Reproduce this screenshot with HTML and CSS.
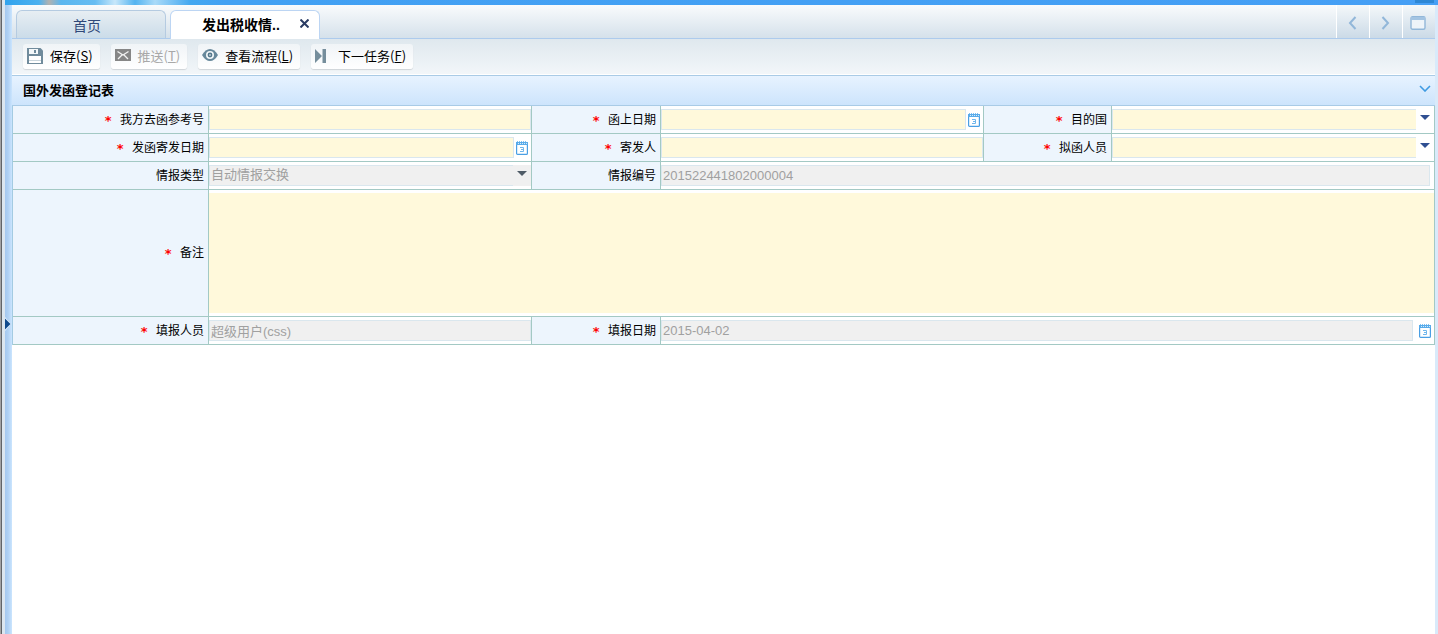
FILE: index.html
```html
<!DOCTYPE html>
<html lang="zh-CN">
<head>
<meta charset="utf-8">
<title>国外发函登记表</title>
<meta name="viewport" content="width=device-width, initial-scale=1">
<link rel="stylesheet" href="styles.css">
</head>
<body>
<svg class="defs" aria-hidden="true">
  <symbol id="calendar" viewBox="0 0 12 14">
    <rect x=".6" y="2" width="10.800" height="11.400" rx="1" fill="#fff" stroke="#4a9fe4" stroke-width="1.200"/>
    <path d="M0 1h12v3H0z" fill="#58abea"/>
    <path d="M1 .5h1M3 .5h1M5 .5h1M7 .5h1M9 .5h1" stroke="#7fc0f2"/>
    <path d="M2 2.500h1M4 2.500h1M6 2.500h1M8 2.500h1M10 2.500h1" stroke="#d4ebfb"/>
    <path d="M4 6.500h3.500v4H4M5 8.500h2" fill="none" stroke="#6fb6ec"/>
  </symbol>
  <symbol id="caret" viewBox="0 0 10 5"><path d="M0 0h10L5 5z" fill="currentColor"/></symbol>
</svg>
<div class="app">
  <aside class="rail">
    <div class="splitter">
      <button class="handle" type="button" aria-label="展开">
        <svg width="6" height="14" viewBox="0 0 6 14"><path d="M0 0l6 7-6 7z" fill="#e9f5ff"/><path d="M0 1.500l5.500 5.500-5.500 5.500z" fill="#0f4a8c"/></svg>
      </button>
    </div>
  </aside>
  <div class="main">
    <div class="banner"><span class="banner-tab"></span></div>
    <div class="body">
      <div class="content">
        <nav class="tabs">
          <button class="tab" type="button">首页</button>
          <div class="tab active">
            <a href="#form">发出税收情..</a>
            <button class="close" type="button" aria-label="关闭">
              <svg width="9" height="9" viewBox="0 0 9 9"><path d="M.5 .5l8 8M8.500 .5l-8 8" stroke="#2b3c63" stroke-width="2"/></svg>
            </button>
          </div>
          <div class="pager">
            <button type="button" aria-label="上一个"><svg width="9" height="14" viewBox="0 0 9 14"><path d="M7.5 1L2 7l5.500 6" fill="none" stroke="#92b7d9" stroke-width="2"/></svg></button>
            <button type="button" aria-label="下一个"><svg width="9" height="14" viewBox="0 0 9 14"><path d="M1.500 1L7 7l-5.500 6" fill="none" stroke="#92b7d9" stroke-width="2"/></svg></button>
            <button type="button" aria-label="窗口"><svg width="16" height="14" viewBox="0 0 16 14"><rect x="1" y=".7" width="14" height="12.600" rx="1.500" fill="#eef4f9" stroke="#92b7d9" stroke-width="1.400"/><path d="M1 1h14v3H1z" fill="#a3c4e2"/></svg></button>
          </div>
        </nav>
        <div class="toolbar">
          <button class="tool" type="button">
            <svg width="16" height="16" viewBox="0 0 16 16"><path d="M0 0h13.500L16 2.500V16H0z" fill="#708b9c"/><path d="M2 1h9v5H2z" fill="#f4f8fa"/><path d="M7 2h2v3H7z" fill="#708b9c"/><path d="M2 8h12v7H2z" fill="#fff"/><path d="M2 12h12v1H2z" fill="#c9d5dc"/></svg>
            <span>保存(<u>S</u>)</span>
          </button>
          <button class="tool raised" type="button" disabled>
            <svg width="16" height="12" viewBox="0 0 16 12"><path d="M0 0h16v12H0z" fill="#868686"/><path d="M2.500 2.500L8 6l5.500-3.500M3 10l4-4M13 10L9 6" fill="none" stroke="#f2f2f2" stroke-width="1.300"/></svg>
            <span>推送(<u>T</u>)</span>
          </button>
          <button class="tool raised" type="button">
            <svg width="16" height="12" viewBox="0 0 16 12"><path d="M0 6Q3.500 0 8 0t8 6q-3.500 6-8 6T0 6z" fill="#67889b"/><circle cx="8" cy="6" r="4" fill="#f1f6f8"/><circle cx="8" cy="6" r="2.400" fill="#54788c"/><circle cx="8" cy="6" r=".8" fill="#fff"/></svg>
            <span>查看流程(<u>L</u>)</span>
          </button>
          <button class="tool next" type="button">
            <svg width="11" height="14" viewBox="0 0 11 14"><path d="M0 0l7 7-7 7zM7.500 0H11v14H7.500z" fill="#768e9c"/></svg>
            <span>下一任务(<u>F</u>)</span>
          </button>
        </div>
        <header class="section">
          <h1>国外发函登记表</h1>
          <button type="button" aria-label="收起"><svg width="12" height="7" viewBox="0 0 12 7"><path d="M1 1l5 5 5-5" fill="none" stroke="#3f9be2" stroke-width="1.600"/></svg></button>
        </header>
        <form class="form" id="form">
          <label class="label required" for="ref">我方去函参考号</label>
          <div class="field"><input id="ref" type="text"></div>
          <label class="label required" for="letter-date">函上日期</label>
          <div class="field"><input id="letter-date" type="text"><button class="pick" type="button" aria-label="选择日期"><svg width="12" height="14"><use href="#calendar"/></svg></button></div>
          <label class="label required" for="country">目的国</label>
          <div class="field"><select id="country"><option></option></select><svg class="caret" width="10" height="5"><use href="#caret"/></svg></div>

          <label class="label required" for="send-date">发函寄发日期</label>
          <div class="field"><input id="send-date" type="text"><button class="pick" type="button" aria-label="选择日期"><svg width="12" height="14"><use href="#calendar"/></svg></button></div>
          <label class="label required" for="sender">寄发人</label>
          <div class="field"><input id="sender" type="text"></div>
          <label class="label required" for="drafter">拟函人员</label>
          <div class="field"><select id="drafter"><option></option></select><svg class="caret" width="10" height="5"><use href="#caret"/></svg></div>

          <label class="label" for="kind">情报类型</label>
          <div class="field off"><select id="kind" disabled><option>自动情报交换</option></select><svg class="caret" width="10" height="5"><use href="#caret"/></svg></div>
          <label class="label" for="number">情报编号</label>
          <div class="field wide inset"><input id="number" type="text" value="201522441802000004" disabled></div>

          <label class="label required" for="remark">备注</label>
          <div class="field full"><textarea id="remark"></textarea></div>

          <label class="label required" for="reporter">填报人员</label>
          <div class="field"><input id="reporter" type="text" value="超级用户(css)" disabled></div>
          <label class="label required" for="report-date">填报日期</label>
          <div class="field wide"><input id="report-date" type="text" value="2015-04-02" disabled><button class="pick spaced" type="button" aria-label="选择日期"><svg width="12" height="14"><use href="#calendar"/></svg></button></div>
        </form>
      </div>
    </div>
  </div>
</div>
</body>
</html>
```
FILE: styles.css
```css
* { box-sizing: border-box; }
body {
  margin: 0;
  font: 12px/16px "Liberation Sans", "Noto Sans CJK SC", sans-serif;
  color: #000;
  background: #fff;
}
button, input, select, textarea { font: inherit; color: inherit; margin: 0; }
button { padding: 0; border: 0; background: none; }
svg { display: block; flex: none; }
.defs { position: absolute; width: 0; height: 0; }

.app { display: flex; min-height: 100vh; }
.rail {
  position: relative;
  display: flex;
  flex: none;
  width: 12px;
  padding: 5px 0 0 5px;
  background: linear-gradient(90deg, #a3a3a3 1px, #606468 1px 2px, #dbe6ef 2px);
}
.splitter { flex: 1; background: linear-gradient(90deg, #a5c8ee, #aed0f3 3px, #cbe5fe); }
.handle { position: absolute; left: 5px; top: 50%; }

.main { display: flex; flex: 1; flex-direction: column; min-width: 0; }
.banner {
  display: flex;
  justify-content: flex-end;
  height: 5px;
  margin-left: -7px;
  padding-right: 4px;
  position: relative;
  background: linear-gradient(90deg, #31a3ed, #4cb1ef 34px, #b2b2b0 44px, #5bb7ef 56px, #67bdf2 90px, #c7e7fa 110px, #54b4f0 130px, #a9daf8 150px, #43a8f0 185px, #42a1f3 220px, #459ff5);
}
.banner-tab { width: 19px; height: 3px; background: #2d87d5; }
.body { flex: 1; padding-right: 3px; background: #d9eafa; }
.content { height: 100%; background: #fff; }

.tabs {
  display: flex;
  align-items: flex-end;
  gap: 4px;
  height: 34px;
  padding-left: 4px;
  border-bottom: 1px solid #adcbed;
  background: linear-gradient(#f9fbfc, #d5e1eb);
}
.tab {
  width: 150px;
  height: 28px;
  border: 1px solid #b5cbe1;
  border-bottom: 0;
  border-radius: 6px 6px 0 0;
  padding: 2px 8px 0 0;
  background: linear-gradient(#e7eef3, #cbdce9);
  color: #2f4879;
  font-size: 14px;
}
.tab.active {
  display: flex;
  align-items: center;
  justify-content: space-between;
  height: 29px;
  margin-bottom: -1px;
  padding: 0 10px 0 31px;
  border-color: #bcd5f3;
  background: #fff;
  font-weight: bold;
}
.tab a { color: #000; text-decoration: none; }
.close { padding-bottom: 3px; }
.pager { display: flex; align-self: stretch; margin-left: auto; }
.pager button {
  display: flex;
  align-items: center;
  justify-content: center;
  width: 33px;
  padding: 2px 2px 0 0;
  border-left: 1px solid #fff;
  background: linear-gradient(#f4f8fa, #cbdae7);
}

.toolbar {
  display: flex;
  align-items: center;
  gap: 11px;
  height: 36px;
  padding-left: 11px;
  border-bottom: 1px solid #fff;
  background: linear-gradient(#dfe8ee, #f2f6f9);
}
.tool {
  display: flex;
  align-items: center;
  gap: 7px;
  height: 25px;
  padding: 0 7px 2px 4px;
  border-radius: 3px;
  background: linear-gradient(#f0f4f7, #fff);
  box-shadow: 0 1px 1px #cfd4d8;
  font: 13px/16px "Noto Sans CJK SC", sans-serif;
}
.tool:disabled { color: #a8a8a8; }
.tool.raised svg { margin-bottom: 2px; }
.tool.next { gap: 12px; }
.tool u { text-underline-offset: 1px; }

.section {
  display: flex;
  align-items: center;
  justify-content: space-between;
  height: 31px;
  padding: 0 4px 0 11px;
  border: 1px solid #a9cbe6;
  border-width: 1px 0;
  background: linear-gradient(#e7f3ff, #cde4fc);
}
.section h1 { margin: 0; font-size: 13px; line-height: 16px; }
.section button { padding-bottom: 5px; }

.form {
  display: grid;
  grid-template-columns: 196px 1fr 129px 1fr 128px 1fr;
  border-left: 1px solid #a3cbe2;
}
.label, .field {
  display: flex;
  align-items: center;
  min-width: 0;
  border: 1px solid #a3c9c4;
  border-width: 0 1px 1px 0;
}
.label { justify-content: flex-end; padding-right: 4px; background: #edf5fd; }
.required::before {
  content: "*";
  margin-right: 8px;
  padding-top: 2px;
  color: #f00;
  font: bold 13px/14px "DejaVu Sans Mono", monospace;
}
.field { padding: 3px 0; background: #fff; }
.wide { grid-column: span 3; }
.full { grid-column: span 5; }
.inset { padding-right: 4px; }
.field input, .field select, .field textarea {
  flex: 1;
  min-width: 0;
  height: 21px;
  padding: 0 1px;
  border: 1px solid #dae7ee;
  border-radius: 0;
  background: #fff9db;
  font-size: 13px;
  line-height: 16px;
  outline: 0;
}
.field select { appearance: none; border-right: 0; }
.field textarea { height: 120px; border: 0; resize: none; }
.field input:disabled, .field select:disabled { background: #f0f0f0; color: #a0a0a0; opacity: 1; }
.field select:disabled { padding-bottom: 2px; }
.pick { padding: 1px 3px 0 2px; }
.pick.spaced { padding: 1px 3px 0 6px; }
.caret { margin: 0 4px 4px; color: #2f4f91; }
.off { background: linear-gradient(#fff 3px, #f0f0f0 3px 24px, #fff 24px); }
.off .caret { color: #4f5b66; }
```
